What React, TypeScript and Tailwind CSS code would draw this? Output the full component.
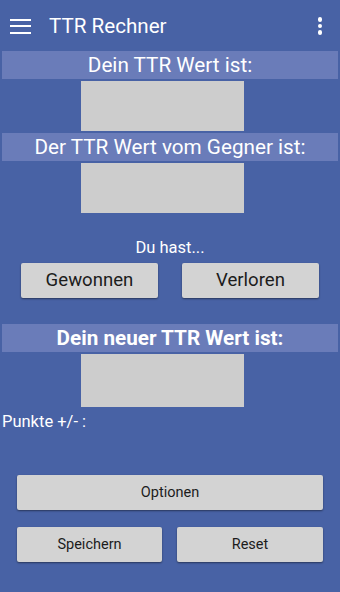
import React from "react";

function Btn({ children, className }: { children: React.ReactNode; className: string }) {
  return (
    <div
      className={
        "flex items-center justify-center rounded-[2px] bg-[#d3d3d3] text-[#1c1c1c] shadow-[0_1px_2px_rgba(0,0,0,0.45)] " +
        className
      }
    >
      {children}
    </div>
  );
}

function Band({ children, bold }: { children: React.ReactNode; bold?: boolean }) {
  return (
    <div
      className={
        "mx-[2px] flex h-[28px] items-center justify-center bg-[#6a7cb9] text-[20.7px] leading-none text-white " +
        (bold ? "font-bold" : "")
      }
    >
      {children}
    </div>
  );
}

function Box() {
  return <div className="ml-[81px] h-[50px] w-[163px] bg-[#cdcdcd]" />;
}

export default function App() {
  return (
    <div
      className="h-[592px] w-[340px] overflow-hidden bg-[#4862a5]"
      style={{ fontFamily: "Roboto, 'Noto Sans', sans-serif" }}
    >
      <div className="flex h-[51px] items-center">
        <div className="ml-[10px] mt-[1px] flex w-[21px] flex-col gap-[4.5px]">
          <div className="h-[2px] bg-white" />
          <div className="h-[2px] bg-white" />
          <div className="h-[2px] bg-white" />
        </div>
        <div className="ml-[18px] mt-[2px] text-[20.6px] leading-none text-white">TTR Rechner</div>
        <div className="ml-auto mr-[18px] mt-[1px] flex flex-col items-center gap-[2px]">
          <div className="h-[4.5px] w-[4.5px] rounded-full bg-white" />
          <div className="h-[4.5px] w-[4.5px] rounded-full bg-white" />
          <div className="h-[4.5px] w-[4.5px] rounded-full bg-white" />
        </div>
      </div>

      <Band>Dein TTR Wert ist:</Band>
      <div className="h-[2px]" />
      <Box />
      <div className="h-[2px]" />
      <Band>Der TTR Wert vom Gegner ist:</Band>
      <div className="h-[2px]" />
      <Box />

      <div className="mt-[25px] text-center text-[16.5px] leading-[19px] text-white">Du hast...</div>

      <div className="mt-[6px] flex justify-center gap-[24px]">
        <Btn className="h-[35px] w-[137px] text-[18.6px]">Gewonnen</Btn>
        <Btn className="h-[35px] w-[137px] text-[18.6px]">Verloren</Btn>
      </div>

      <div className="h-[26px]" />
      <Band bold>Dein neuer TTR Wert ist:</Band>
      <div className="h-[2px]" />
      <div className="ml-[81px] h-[53px] w-[163px] bg-[#cdcdcd]" />

      <div className="ml-[2px] mt-[5px] text-[16.5px] leading-[19px] text-white">Punkte +/- :</div>

      <div className="mt-[44px] flex flex-col items-center">
        <Btn className="h-[35px] w-[306px] text-[14.5px]">Optionen</Btn>
        <div className="mt-[17px] flex gap-[15px]">
          <Btn className="h-[35px] w-[145px] text-[14.5px]">Speichern</Btn>
          <Btn className="h-[35px] w-[146px] text-[14.5px]">Reset</Btn>
        </div>
      </div>
    </div>
  );
}
